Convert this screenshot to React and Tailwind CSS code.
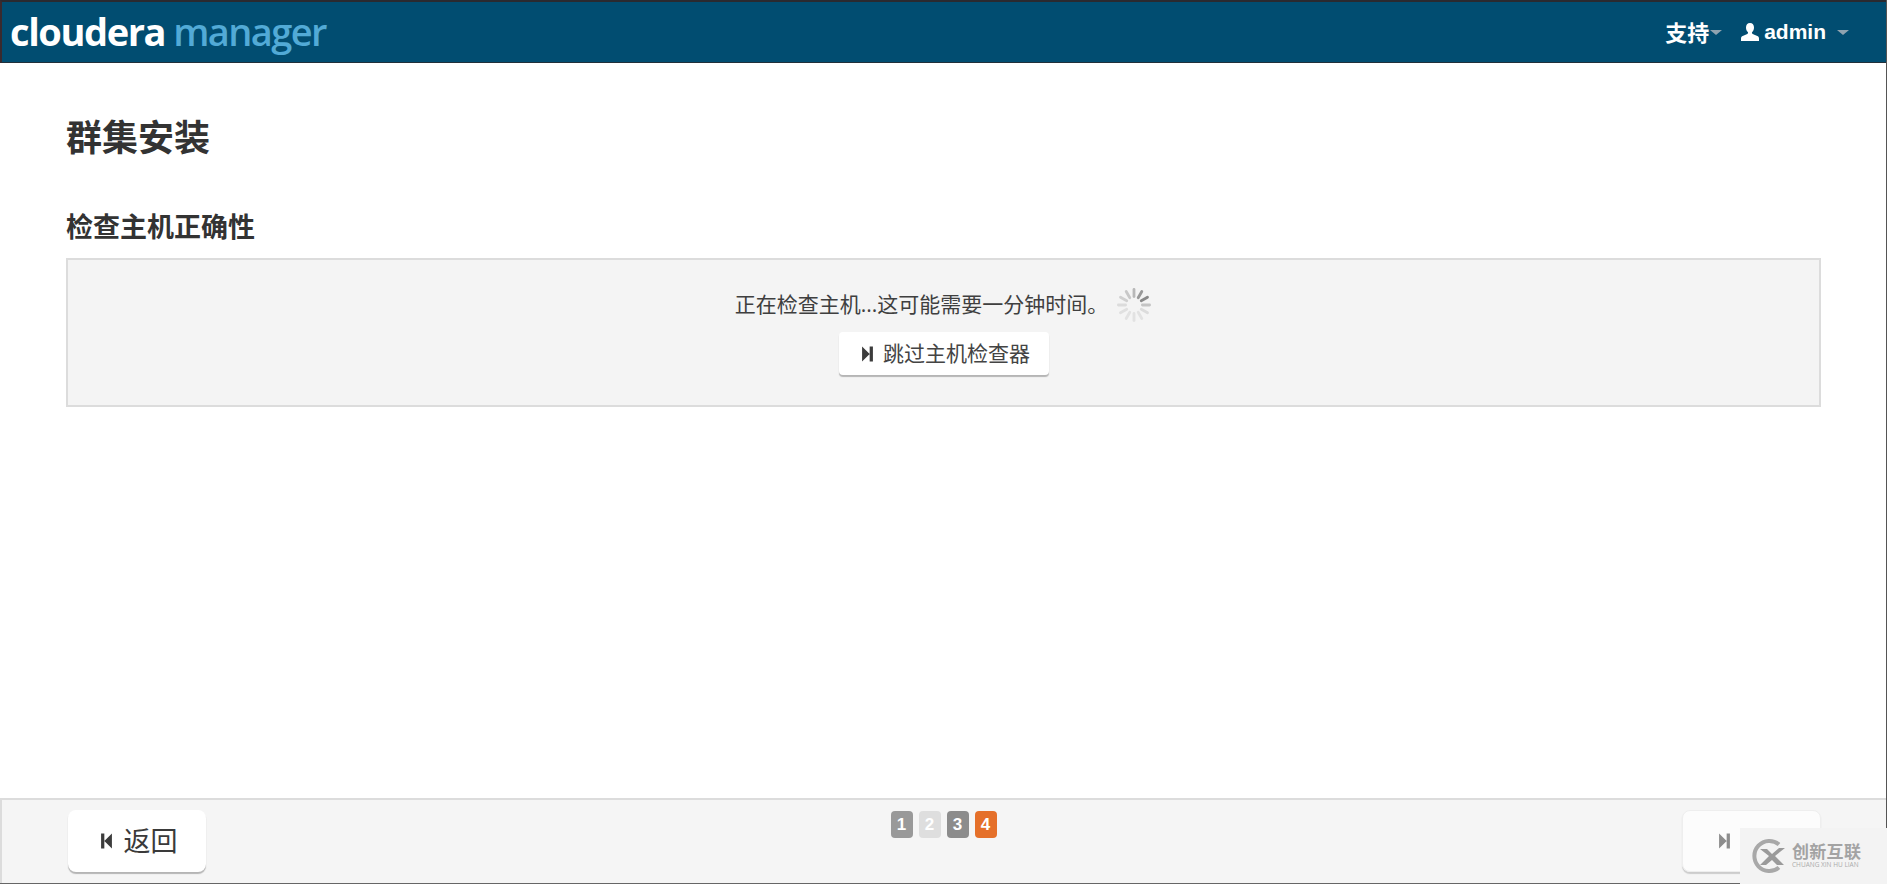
const CJK = 'font-["Open_Sans","Noto_Sans_CJK_SC",sans-serif]';

function StepIcon({ back = false, className = '' }) {
  return (
    <svg viewBox="0 0 12 16" className={className} fill="currentColor" aria-hidden="true">
      {back ? (
        <path d="M1 1h3v14H1zM4 8l7-7v14z" />
      ) : (
        <path d="M11 1H8v14h3zM8 8L1 1v14z" />
      )}
    </svg>
  );
}

function Spinner() {
  const spokes = [
    [0, '#b8b8b8'], [30, '#999'], [60, '#8a8a8a'], [90, '#c4c4c4'], [120, '#dcdcdc'], [150, '#e2e2e2'],
    [180, '#e2e2e2'], [210, '#e2e2e2'], [240, '#e0e0e0'], [270, '#dcdcdc'], [300, '#d0d0d0'], [330, '#c8c8c8'],
  ];
  return (
    <svg viewBox="0 0 36 36" className="w-9 h-9">
      {spokes.map(([deg, color]) => (
        <rect key={deg} x="16.6" y="1" width="2.8" height="10" rx="1.4" fill={color} transform={`rotate(${deg} 18 18)`} />
      ))}
    </svg>
  );
}

function Caret({ className = '' }) {
  return <span className={`inline-block w-0 h-0 border-x-[6px] border-x-transparent border-t-[5px] border-t-[#8fa3b0] ${className}`} />;
}

function Step({ n, color }) {
  return (
    <span className={`w-[22px] h-[27px] rounded-[4px] flex items-center justify-center text-white text-[17px] font-bold font-['Liberation_Sans',sans-serif] ${color}`}>
      {n}
    </span>
  );
}

export default function App() {
  return (
    <div className={`relative h-screen flex flex-col overflow-hidden bg-white text-[#333] ${CJK}`}>
      {/* Top bar */}
      <header className="h-[63px] shrink-0 bg-[#014d71] border-t-2 border-b border-l-2 border-t-[#2a2a30] border-b-[#22303a] border-l-[#3a2a2e] flex items-center justify-between pl-[8px] pr-[38px]">
        <div className="flex items-baseline font-['Open_Sans',sans-serif] text-[38px] leading-none tracking-[-1.4px] -mt-[3px]">
          <span className="text-white font-bold">cloudera</span>
          <span className="text-[#52aad6] font-semibold ml-[8px] tracking-[-1.6px]">manager</span>
        </div>
        <div className="flex items-center text-white text-[22px] font-bold">
          <span>支持</span>
          <Caret className="ml-[1px]" />
          <svg viewBox="0 0 18 18" className="w-[18px] h-[18px] ml-[19px] mr-[5px]" fill="currentColor">
            <path d="M9 0c2.6 0 4 1.9 4 4.4 0 1.9-.8 3.6-1.8 4.6-.5.6-.3 1.5.5 1.9l4.6 2.2c.8.4 1.7 1 1.7 2.4V18H0v-2.5c0-1.4.9-2 1.700-2.400l4.600-2.200c.8-.4 1-1.300.5-1.900C5.800 8 5 6.300 5 4.400 5 1.900 6.400 0 9 0z" />
          </svg>
          <span className="font-['Liberation_Sans',sans-serif] text-[21px]">admin</span>
          <Caret className="ml-[11px]" />
        </div>
      </header>

      {/* Content */}
      <main className="flex-1 px-[66px] pt-[52px]">
        <h1 className="text-[36px] leading-[46px] font-bold">群集安装</h1>
        <h2 className="mt-[49px] text-[27px] leading-[34px] font-bold">检查主机正确性</h2>
        <div className="mt-[14px] h-[149px] border-2 border-[#dcdcdc] bg-[#f4f4f4] flex flex-col items-center pt-[27px]">
          <div className="flex items-center h-[36px] text-[21px] text-[#3f3f3f]">
            <span>正在检查主机...这可能需要一分钟时间。</span>
            <span className="ml-[8px]"><Spinner /></span>
          </div>
          <button className="mt-[9px] w-[210px] h-[43px] rounded-[4px] bg-white shadow-[0_2px_1px_#b5b5b5] flex items-center justify-center gap-[9px] pl-[4px] text-[21px] text-[#444]">
            <StepIcon className="w-[13px] h-[18px] text-[#3c3c3c]" />
            跳过主机检查器
          </button>
        </div>
      </main>

      {/* Footer */}
      <footer className="relative h-[86px] shrink-0 bg-[#f5f5f5] border-t-2 border-l-2 border-[#dcdcdc] flex justify-between pl-[66px] pr-[66px] pt-[10px]">
        <button className="w-[138px] h-[62px] rounded-[8px] bg-white shadow-[0_2px_1px_#b5b5b5] flex items-center justify-center gap-[11px] pl-[3px] text-[27px] text-[#3a3a3a]">
          <StepIcon back className="w-[13px] h-[18px] text-[#3c3c3c]" />
          返回
        </button>
        <div className="flex gap-[6px] h-[27px] mt-[1px] -ml-[1px]">
          <Step n="1" color="bg-[#999]" />
          <Step n="2" color="bg-[#dedede]" />
          <Step n="3" color="bg-[#8c8c8c]" />
          <Step n="4" color="bg-[#e5702a]" />
        </div>
        <button className="w-[139px] h-[62px] rounded-[8px] bg-white/70 border border-[#eee] shadow-[0_2px_1px_#ccc] flex items-center pl-[35px] text-[#8d8d8d]">
          <StepIcon className="w-[13px] h-[18px]" />
        </button>
      </footer>

      {/* Watermark over the footer corner */}
      <div className="absolute right-0 bottom-0 w-[147px] h-[56px] bg-[#f3f3f3] flex items-center pl-[11px] gap-[5px]">
        <svg viewBox="0 0 36 36" className="w-[36px] h-[36px] shrink-0">
          <path d="M28 6.500A15 15 0 1 0 28 29.500" fill="none" stroke="#a8a8a8" strokeWidth="4" />
          <path d="M9 11h7l5 5 7-6h6l-10 8 9 9h-7l-5-5-6 5H9l9-9z" fill="#9a9a9a" />
        </svg>
        <div className="flex flex-col leading-none">
          <span className="text-[17px] font-bold text-[#a3a3a3] tracking-[0.3px]">创新互联</span>
          <span className="text-[6.500px] text-[#ababab] mt-[2px] whitespace-nowrap">CHUANG XIN HU LIAN</span>
        </div>
      </div>

      {/* Dark edge on the right and bottom */}
      <div className="absolute right-0 top-0 bottom-[56px] w-px bg-[#555]" />
      <div className="absolute left-0 right-[147px] bottom-0 h-px bg-[#666]" />
    </div>
  );
}
